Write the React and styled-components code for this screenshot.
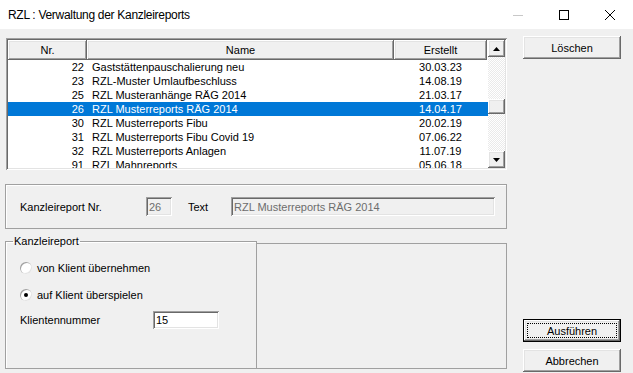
import React from 'react';
import styled, { createGlobalStyle, css } from 'styled-components';

const GlobalStyle = createGlobalStyle`
  html, body {
    margin: 0;
    padding: 0;
    background: #f0f0f0;
  }
  body {
    font-family: "Liberation Sans", Arial, sans-serif;
    font-size: 11px;
    color: #000;
  }
`;

const raised = css`
  background: #f0f0f0;
  box-shadow: inset -1px -1px #696969, inset 1px 1px #ffffff,
    inset -2px -2px #a0a0a0, inset 2px 2px #e3e3e3;
`;

const sunken = css`
  box-shadow: inset 1px 1px #a0a0a0, inset -1px -1px #ffffff,
    inset 2px 2px #696969, inset -2px -2px #e3e3e3;
`;

const etched = css`
  border: 1px solid #a0a0a0;
  box-shadow: inset 1px 1px #ffffff;
`;

const Window = styled.div`
  width: 633px;
  height: 373px;
  display: flex;
  flex-direction: column;
  overflow: hidden;
`;

const TitleBar = styled.div`
  height: 29px;
  flex: none;
  background: #fff;
  display: flex;
  align-items: center;
`;

const Title = styled.div`
  flex: 1;
  padding-left: 8px;
  font-size: 12px;
  letter-spacing: -0.3px;
  color: #000;
`;

const Caption = styled.div`
  width: 46px;
  height: 29px;
  display: flex;
  align-items: center;
  justify-content: center;
`;

const Client = styled.div`
  flex: 1;
  display: flex;
  padding-left: 5px;
`;

const LeftCol = styled.div`
  width: 502px;
  display: flex;
  flex-direction: column;
`;

const RightCol = styled.div`
  margin-left: 16px;
  display: flex;
  flex-direction: column;
  padding-top: 7px;
  padding-bottom: 1px;
`;

const Button = styled.div`
  width: 98px;
  height: 23px;
  box-sizing: border-box;
  display: flex;
  align-items: center;
  justify-content: center;
  ${raised};
  ${(p) =>
    p.$default &&
    css`
      border: 1px solid #000;
      position: relative;
      &::after {
        content: '';
        position: absolute;
        inset: 3px;
        border: 1px dotted #000;
      }
    `}
  & + & {
    margin-top: 7px;
  }
`;

const Spacer = styled.div`
  flex: 1;
`;

const ListBox = styled.div`
  margin: 9px 0 0 1px;
  width: 501px;
  height: 132px;
  box-sizing: border-box;
  padding: 2px;
  background: #fff;
  display: flex;
  ${sunken};
`;

const ListArea = styled.div`
  width: 480px;
  display: flex;
  flex-direction: column;
  overflow: hidden;
`;

const cols = css`
  display: grid;
  grid-template-columns: 79px 307px 93px;
`;

const Header = styled.div`
  ${cols};
  height: 20px;
  flex: none;
`;

const HeaderCell = styled.div`
  ${raised};
  text-align: center;
  line-height: 20px;
`;

const Row = styled.div`
  ${cols};
  height: 14px;
  line-height: 14px;
  flex: none;
  background: ${(p) => (p.$selected ? '#0078d7' : 'transparent')};
  color: ${(p) => (p.$selected ? '#fff' : '#000')};
`;

const NrCell = styled.div`
  text-align: right;
  padding-right: 3px;
`;

const NameCell = styled.div`
  padding-left: 5px;
  white-space: nowrap;
`;

const DateCell = styled.div`
  text-align: center;
`;

const ScrollBar = styled.div`
  width: 17px;
  display: flex;
  flex-direction: column;
`;

const ScrollBtn = styled.div`
  ${raised};
  height: 17px;
  flex: none;
  display: flex;
  align-items: center;
  justify-content: center;
`;

const Track = styled.div`
  flex: 1;
  background: repeating-conic-gradient(#ffffff 0 25%, #eaeaea 0 50%) 0 0 / 2px 2px;
`;

const Thumb = styled.div`
  ${raised};
  height: 15px;
  margin-top: 42px;
`;

const NrGroup = styled.div`
  margin-top: 14px;
  height: 45px;
  box-sizing: border-box;
  ${etched};
  display: flex;
  align-items: center;
  padding-left: 14px;
`;

const Label = styled.div`
  width: ${(p) => p.$w}px;
  flex: none;
  ${(p) => p.$ml && `margin-left: ${p.$ml}px;`}
`;

const Field = styled.div`
  width: ${(p) => p.$w}px;
  height: ${(p) => p.$h || 19}px;
  box-sizing: border-box;
  padding: 0 3px;
  display: flex;
  align-items: center;
  white-space: nowrap;
  overflow: hidden;
  background: ${(p) => (p.$disabled ? '#f0f0f0' : '#fff')};
  color: ${(p) => (p.$disabled ? '#6d6d6d' : '#000')};
  ${sunken};
`;

const LowerRow = styled.div`
  margin-top: 6px;
  height: 134px;
  display: flex;
`;

const GroupBox = styled.fieldset`
  width: 252px;
  box-sizing: border-box;
  margin: 0;
  padding: 0 0 0 14px;
  border: 1px solid #a0a0a0;
  box-shadow: inset 1px 1px #ffffff;
`;

const Legend = styled.legend`
  margin-left: -7px;
  padding: 0 1px;
  line-height: 13px;
`;

const RadioRow = styled.div`
  display: flex;
  align-items: center;
  height: 13px;
  margin-top: ${(p) => p.$mt}px;
`;

const Radio = styled.span`
  width: 12px;
  height: 12px;
  box-sizing: border-box;
  border-radius: 50%;
  background: #fff;
  margin-right: 5px;
  display: flex;
  align-items: center;
  justify-content: center;
  box-shadow: inset 1px 1px #a0a0a0, inset -1px -1px #e3e3e3;
  &::after {
    content: '';
    width: 4px;
    height: 4px;
    border-radius: 50%;
    background: ${(p) => (p.$checked ? '#000' : 'transparent')};
  }
`;

const FieldRow = styled.div`
  display: flex;
  align-items: center;
  margin-top: 10px;
`;

const SidePanel = styled.div`
  flex: 1;
  margin-top: 8px;
  border: 1px solid #a0a0a0;
  border-left: none;
`;

const reports = [
  ['22', 'Gaststättenpauschalierung neu', '30.03.23'],
  ['23', 'RZL-Muster Umlaufbeschluss', '14.08.19'],
  ['25', 'RZL Musteranhänge RÄG 2014', '21.03.17'],
  ['26', 'RZL Musterreports RÄG 2014', '14.04.17'],
  ['30', 'RZL Musterreports Fibu', '20.02.19'],
  ['31', 'RZL Musterreports Fibu Covid 19', '07.06.22'],
  ['32', 'RZL Musterreports Anlagen', '11.07.19'],
  ['91', 'RZL Mahnreports', '05.06.18'],
];

const Arrow = ({ up }) => (
  <svg width="7" height="4" viewBox="0 0 7 4">
    <path d={up ? 'M0 4 L3.5 0 L7 4 Z' : 'M0 0 L3.5 4 L7 0 Z'} fill="#000" />
  </svg>
);

export default function App() {
  return (
    <>
      <GlobalStyle />
      <Window>
        <TitleBar>
          <Title>RZL : Verwaltung der Kanzleireports</Title>
          <Caption>
            <svg width="10" height="10" viewBox="0 0 10 10">
              <line x1="0" y1="5.5" x2="10" y2="5.5" stroke="#c8c8c8" />
            </svg>
          </Caption>
          <Caption>
            <svg width="10" height="10" viewBox="0 0 10 10">
              <rect x="0.5" y="0.5" width="9" height="9" fill="none" stroke="#000" />
            </svg>
          </Caption>
          <Caption>
            <svg width="10" height="10" viewBox="0 0 10 10">
              <path d="M0 0 L10 10 M10 0 L0 10" stroke="#000" strokeWidth="1" />
            </svg>
          </Caption>
        </TitleBar>
        <Client>
          <LeftCol>
            <ListBox>
              <ListArea>
                <Header>
                  <HeaderCell>Nr.</HeaderCell>
                  <HeaderCell>Name</HeaderCell>
                  <HeaderCell>Erstellt</HeaderCell>
                </Header>
                {reports.map(([nr, name, date]) => (
                  <Row key={nr} $selected={nr === '26'}>
                    <NrCell>{nr}</NrCell>
                    <NameCell>{name}</NameCell>
                    <DateCell>{date}</DateCell>
                  </Row>
                ))}
              </ListArea>
              <ScrollBar>
                <ScrollBtn>
                  <Arrow up />
                </ScrollBtn>
                <Track>
                  <Thumb />
                </Track>
                <ScrollBtn>
                  <Arrow />
                </ScrollBtn>
              </ScrollBar>
            </ListBox>

            <NrGroup>
              <Label $w={126}>Kanzleireport Nr.</Label>
              <Field $w={26} $disabled>26</Field>
              <Label $w={43} $ml={16}>Text</Label>
              <Field $w={264} $disabled>RZL Musterreports RÄG 2014</Field>
            </NrGroup>

            <LowerRow>
              <GroupBox>
                <Legend>Kanzleireport</Legend>
                <RadioRow $mt={13}>
                  <Radio />
                  von Klient übernehmen
                </RadioRow>
                <RadioRow $mt={14}>
                  <Radio $checked />
                  auf Klient überspielen
                </RadioRow>
                <FieldRow>
                  <Label $w={133}>Klientennummer</Label>
                  <Field $w={66} $h={18}>15</Field>
                </FieldRow>
              </GroupBox>
              <SidePanel />
            </LowerRow>
          </LeftCol>
          <RightCol>
            <Button>Löschen</Button>
            <Spacer />
            <Button $default>Ausführen</Button>
            <Button>Abbrechen</Button>
          </RightCol>
        </Client>
      </Window>
    </>
  );
}
